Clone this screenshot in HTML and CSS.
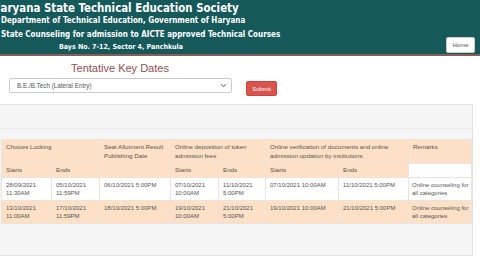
FILE: index.html
```html
<!DOCTYPE html>
<html lang="en">
<head>
  <meta charset="UTF-8">
  <title>Tentative Key Dates</title>
  <link rel="stylesheet" href="styles.css">
</head>
<body>

  <!-- Header -->
  <header class="top">
    <div class="brand">
      <div class="title">Haryana State Technical Education Society</div>
      <div class="sub">Department of Technical Education, Government of Haryana</div>
      <div class="sub">State Counseling for admission to AICTE approved Technical Courses</div>
      <div class="addr">Bays No. 7-12, Sector 4, Panchkula</div>
    </div>
    <button class="home">Home</button>
  </header>

  <!-- Course picker -->
  <div class="search">
    <h2>Tentative Key Dates</h2>
    <div class="form-row">
      <div class="select">
        <span>B.E./B.Tech (Lateral Entry)</span>
        <svg width="7" height="5" viewBox="0 0 7 5"><path d="M1 1.2 L3.5 3.7 L6 1.2" fill="none" stroke="#555" stroke-width="1"/></svg>
      </div>
      <button class="submit">Submit</button>
    </div>
  </div>

  <!-- Dates table -->
  <div class="panel">
    <div class="panel-head"></div>
    <div class="panel-body">
      <table>
        <colgroup>
          <col style="width:50px"><col style="width:48px"><col style="width:71px"><col style="width:48px">
          <col style="width:47px"><col style="width:73px"><col style="width:70px"><col style="width:63px">
        </colgroup>
        <tr class="hd">
          <th colspan="2">Choices Locking</th>
          <th rowspan="2">Seat Allotment Result Publishing Date</th>
          <th colspan="2">Online deposition of token admission fees</th>
          <th colspan="2">Online verification of documents and online admission updation by institutions</th>
          <th>Remarks</th>
        </tr>
        <tr class="hd2">
          <th>Starts</th><th>Ends</th>
          <th>Starts</th><th>Ends</th>
          <th>Starts</th><th>Ends</th>
          <td class="blank"></td>
        </tr>
        <tr class="row">
          <td>28/09/2021 11:30AM</td>
          <td>05/10/2021 11:59PM</td>
          <td>06/10/2021 5:00PM</td>
          <td>07/10/2021 10:00AM</td>
          <td>11/10/2021 5:00PM</td>
          <td>07/10/2021 10:00AM</td>
          <td>11/10/2021 5:00PM</td>
          <td class="note">Online counseling for all categories</td>
        </tr>
        <tr class="row alt">
          <td>13/10/2021 11:00AM</td>
          <td>17/10/2021 11:59PM</td>
          <td>18/10/2021 5:00PM</td>
          <td>19/10/2021 10:00AM</td>
          <td>21/10/2021 5:00PM</td>
          <td>19/10/2021 10:00AM</td>
          <td>21/10/2021 5:00PM</td>
          <td class="note">Online counseling for all categories</td>
        </tr>
      </table>
    </div>
  </div>

</body>
</html>
```

FILE: styles.css
```css
* { box-sizing: border-box; }
body { margin: 0; font-family: "Liberation Sans", Arial, sans-serif; background: #fff; overflow: hidden; }

.top { height: 56px; background: #15595b; border-bottom: 2px solid #8a5d57; display: flex; justify-content: space-between; align-items: flex-end; padding: 0 5px 1px 1px; }
.brand { color: #fff; font-family: "DejaVu Sans Condensed", "DejaVu Sans", sans-serif; font-weight: bold; white-space: nowrap; }
.title { font-size: 11.4px; line-height: 12px; margin-left: -9px; }
.sub { font-size: 8px; line-height: 14px; }
.addr { font-size: 7px; line-height: 11px; width: 240px; text-align: center; }
.home { width: 29px; height: 16px; padding: 0; background: #fff; border: 1px solid #ccc; border-radius: 2px; font-family: "Liberation Sans", Arial, sans-serif; font-size: 6px; color: #555; }

.search h2 { margin: 0; padding-top: 5px; width: 240px; text-align: center; font-weight: normal; font-size: 11px; line-height: 14px; color: #8f4f4f; }
.form-row { display: flex; align-items: flex-start; gap: 14px; margin-top: 3px; padding-left: 9px; }
.select { width: 223px; height: 15px; border: 1px solid #ccc; border-radius: 2px; background: #fff; display: flex; align-items: center; justify-content: space-between; padding: 0 4px 0 7px; font-size: 6.3px; color: #555; }
.submit { margin-top: 3px; width: 31px; height: 15px; padding: 0; background: #d9534f; border: 1px solid #c9433f; border-radius: 2px; color: #fff; font-family: "Liberation Sans", Arial, sans-serif; font-size: 6px; }

.panel { margin: 8px 7px 0 -3px; border: 1px solid #e3e3e3; background: #f5f5f5; }
.panel-head { height: 24px; border-bottom: 1px solid #e8e8e8; }
.panel-body { padding: 10px 2px 31px 3px; }

table { width: 470px; table-layout: fixed; border-collapse: collapse; font-size: 6.2px; color: #555; }
th, td { text-align: left; vertical-align: top; font-weight: normal; border: 1px solid #ece4dc; line-height: 8.5px; }
.hd th { background: #fde0c5; padding: 3px 4px 3px; height: 24px; }
.hd2 th { background: #fde0c5; padding: 2px 4px; height: 13px; }
.hd2 .blank { background: #fff; }
.row td { background: #fff; padding: 3px 3px 2px 4px; height: 22px; font-size: 6px; }
.row td.note { padding: 3px 0 2px 3px; }
.row.alt td { background: #fde0c5; }
```
